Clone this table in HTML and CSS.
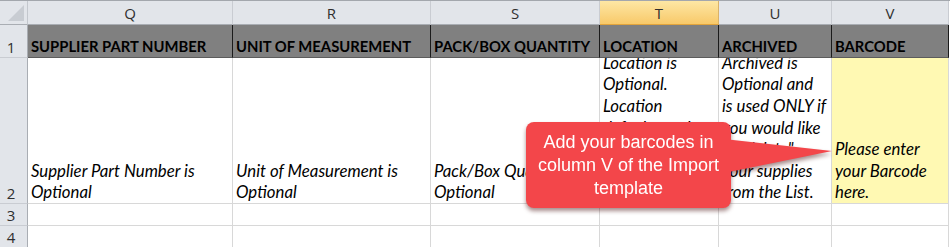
FILE: index.html
```html
<!DOCTYPE html>
<html>
<head>
<meta charset="utf-8">
<link rel="stylesheet" href="styles.css">
</head>
<body>
<div class="sheet">
  <div class="corner"><svg class="corner-tri" width="16" height="16" viewBox="0 0 16 16"><polygon points="0,16 16,16 16,0" /></svg></div>
  <div class="colhead">Q</div>
  <div class="colhead">R</div>
  <div class="colhead">S</div>
  <div class="colhead active">T</div>
  <div class="colhead">U</div>
  <div class="colhead">V</div>

  <div class="rowhead">1</div>
  <div class="hcell">SUPPLIER PART NUMBER</div>
  <div class="hcell">UNIT OF MEASUREMENT</div>
  <div class="hcell">PACK/BOX QUANTITY</div>
  <div class="hcell">LOCATION</div>
  <div class="hcell">ARCHIVED</div>
  <div class="hcell">BARCODE</div>

  <div class="rowhead">2</div>
  <div class="cell"><span>Supplier Part Number is</span><span>Optional</span></div>
  <div class="cell"><span>Unit of Measurement is</span><span>Optional</span></div>
  <div class="cell"><span>Pack/Box Quantity is</span><span>Optional</span></div>
  <div class="cell"><span>Location is</span><span>Optional.</span><span>Location</span><span>defaults to the</span><span>first location</span><span>in the List if</span><span>left blank.</span></div>
  <div class="cell"><span>Archived is</span><span>Optional and</span><span>is used ONLY if</span><span>you would like</span><span>to "delete"</span><span>your supplies</span><span>from the List.</span></div>
  <div class="cell yellow"><span>Please enter</span><span>your Barcode</span><span>here.</span></div>

  <div class="rowhead small">3</div>
  <div class="cell"></div><div class="cell"></div><div class="cell"></div><div class="cell"></div><div class="cell"></div><div class="cell"></div>

  <div class="rowhead small">4</div>
  <div class="cell"></div><div class="cell"></div><div class="cell"></div><div class="cell"></div><div class="cell"></div><div class="cell"></div>
</div>

<div class="callout">
  <svg class="pointer" width="112" height="40" viewBox="0 0 112 40"><polygon points="0,4 108,16 0,38" /></svg>
  <div class="bubble">Add your barcodes in<br>column V of the Import<br>template</div>
</div>
</body>
</html>
```
FILE: styles.css
```css
html, body {
  margin: 0;
  padding: 0;
  background: #ffffff;
  overflow: hidden;
}

.sheet {
  display: grid;
  grid-template-columns: 28px 205px 198px 169px 119px 113px 117px 1px;
  grid-template-rows: 24px 33px 146px 22px 22px;
  border-top: 1px solid #a3a7ad;
  font-family: Lato, "Open Sans", sans-serif;
  width: 950px;
}

.sheet > div {
  box-sizing: border-box;
  overflow: hidden;
}

.corner {
  background: #e2e5ea;
  border-right: 1px solid #c3c7cd;
  border-bottom: 1px solid #a9adb3;
  position: relative;
  grid-column: 1;
}

.corner-tri {
  position: absolute;
  right: 3px;
  bottom: 3px;
  fill: #c8ccd2;
}

.colhead {
  background: #e2e5ea;
  border-right: 1px solid #c9ccd2;
  border-bottom: 1px solid #a9adb3;
  color: #2f2f2f;
  font-family: "Open Sans", sans-serif;
  font-size: 15px;
  line-height: 24px;
  text-align: center;
}

.colhead.active {
  background: linear-gradient(#fde7a4, #f8c96a);
  border-bottom: 1px solid #e2a43c;
  border-right: 1px solid #d9b26a;
}

.rowhead {
  grid-column: 1;
  background: #e2e5ea;
  border-right: 1px solid #a9adb3;
  border-bottom: 1px solid #c9ccd2;
  color: #2f2f2f;
  font-family: "Open Sans", sans-serif;
  font-size: 15px;
  display: flex;
  align-items: flex-end;
  justify-content: center;
  padding-right: 5px;
  line-height: 20px;
}

.rowhead.small {
  align-items: center;
}

.hcell {
  background: #808080;
  border-right: 1px solid #1b1b1b;
  border-bottom: 1px solid #5c5c5c;
  color: #000000;
  font-weight: 700;
  font-size: 14.8px;
  line-height: 20px;
  padding-left: 3px;
  display: flex;
  align-items: flex-end;
  padding-bottom: 1px;
  white-space: nowrap;
}

.cell {
  border-right: 1px solid #d8d8d8;
  border-bottom: 1px solid #d8d8d8;
  font-style: italic;
  font-size: 16.8px;
  line-height: 21.6px;
  padding-left: 3px;
  display: flex;
  flex-direction: column;
  justify-content: flex-end;
  white-space: nowrap;
  color: #000;
}

.cell span {
  display: block;
  flex: none;
}

.yellow {
  background: #fff9b3;
}

.callout {
  position: absolute;
  left: 526px;
  top: 122px;
  width: 310px;
  height: 90px;
  filter: drop-shadow(0 3px 2px rgba(60, 0, 0, 0.45));
}

.pointer {
  position: absolute;
  left: 198px;
  top: 13px;
  fill: #f3464a;
}

.bubble {
  position: absolute;
  left: 0;
  top: 0;
  width: 205px;
  height: 86px;
  border-radius: 8px;
  background: #f3464a;
  color: #ffffff;
  font-family: "Liberation Sans", Arial, sans-serif;
  font-size: 18px;
  line-height: 23px;
  text-align: center;
  display: flex;
  align-items: center;
  justify-content: center;
}
```
